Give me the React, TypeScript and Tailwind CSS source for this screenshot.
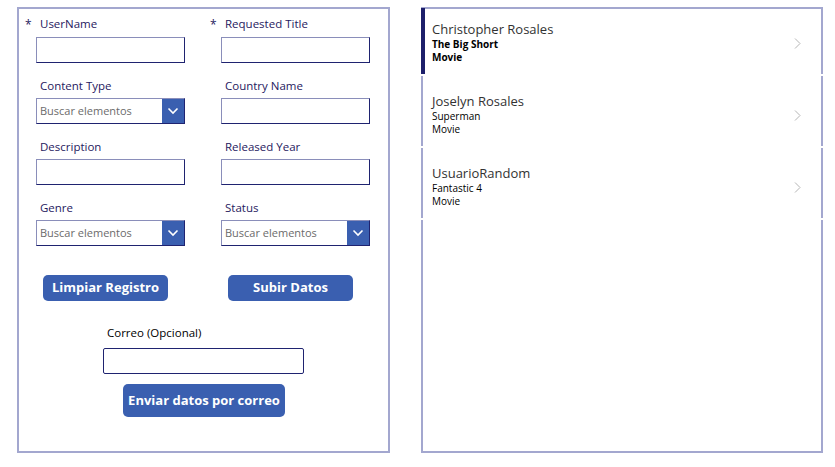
import React from 'react';

const font = { fontFamily: '"Open Sans", "Liberation Sans", sans-serif' };

const TextInput = ({ className = '' }: { className?: string }) => (
  <div
    className={`h-[26px] bg-white border border-[#1f2370] border-t-[#8a8eba] border-l-[#8a8eba] ${className}`}
  />
);

const Dropdown = () => (
  <div className="h-[26px] flex border border-[#1f2370] border-t-[#8a8eba] border-l-[#8a8eba] bg-white">
    <div className="flex-1 flex items-center pl-[3px] text-[11px] text-[#6b6b6b]">Buscar elementos</div>
    <div className="w-[22px] bg-[#3a5fb0] flex items-center justify-center">
      <svg width="12" height="8" viewBox="0 0 12 8" fill="none">
        <path d="M1.5 1.5 L6 6 L10.5 1.5" stroke="white" strokeWidth="1.6" />
      </svg>
    </div>
  </div>
);

const Field = ({
  label,
  required,
  kind = 'text',
  first,
}: {
  label: string;
  required?: boolean;
  kind?: 'text' | 'select';
  first?: boolean;
}) => (
  <div>
    <div
      className={`relative h-4 pl-[4px] text-[11.5px] leading-4 text-[#1f2060] ${first ? 'mt-[1px] mb-[5px]' : 'mb-1'}`}
    >
      {required && <span className="absolute -left-[11px] top-[1px] text-[12px]">*</span>}
      {label}
    </div>
    {kind === 'text' ? <TextInput /> : <Dropdown />}
  </div>
);

const Button = ({ children, className = '' }: { children: React.ReactNode; className?: string }) => (
  <button className={`bg-[#3a5fb0] text-white font-bold text-[13px] rounded-[5px] whitespace-nowrap ${className}`}>
    {children}
  </button>
);

const items = [
  { name: 'Christopher Rosales', title: 'The Big Short', type: 'Movie', selected: true },
  { name: 'Joselyn Rosales', title: 'Superman', type: 'Movie' },
  { name: 'UsuarioRandom', title: 'Fantastic 4', type: 'Movie' },
];

const App = () => {
  return (
    <div className="w-[835px] h-[467px] bg-white flex gap-[31px] pl-[17px] pt-[7px]" style={font}>
      <div className="w-[373px] h-[446px] border-2 border-[#a3a7cf] pl-[17px] pt-[6px]">
        <div className="grid grid-cols-[149px_149px] gap-x-[36px] gap-y-[15px]">
          <Field label="UserName" required first />
          <Field label="Requested Title" required first />
          <Field label="Content Type" kind="select" />
          <Field label="Country Name" />
          <Field label="Description" />
          <Field label="Released Year" />
          <Field label="Genre" kind="select" />
          <Field label="Status" kind="select" />
        </div>
        <div className="grid grid-cols-[149px_149px] gap-x-[36px] mt-[29px] pl-[7px]">
          <Button className="w-[125px] h-[26px]">Limpiar Registro</Button>
          <Button className="w-[125px] h-[26px]">Subir Datos</Button>
        </div>
        <div className="flex flex-col items-start mt-[24px]">
          <div className="w-[201px] ml-[67px]">
            <div className="h-4 pl-[4px] text-[11.5px] leading-4 text-black">Correo (Opcional)</div>
            <div className="mt-[7px] h-[26px] border border-[#1f2370] rounded-[2px] bg-white" />
          </div>
          <Button className="mt-[10px] ml-[87px] w-[162px] h-[33px]">Enviar datos por correo</Button>
        </div>
      </div>

      <div className="w-[402px] h-[446px] border-2 border-[#a3a7cf]">
        {items.map((it, i) => (
          <div
            key={it.name}
            className={`relative flex items-start pl-[9px] pr-[20px] ${i === 0 ? 'h-[67px] pt-[12px]' : 'h-[72px] pt-[17px]'}`}
          >
            {it.selected && <div className="absolute -left-[2px] -top-[1px] bottom-[1px] w-[4px] bg-[#1d1f6b]" />}
            <div className="flex-1">
              <div className="text-[13px] leading-4 text-[#323232]">{it.name}</div>
              <div className={`text-[10px] leading-[14px] text-black ${it.selected ? 'font-bold' : 'font-medium'}`}>
                {it.title}
              </div>
              <div className={`text-[10px] leading-[13px] text-black ${it.selected ? 'font-bold' : 'font-medium'}`}>
                {it.type}
              </div>
            </div>
            <svg className="mt-[17px]" width="7" height="11" viewBox="0 0 7 11" fill="none">
              <path d="M1 0.5 L6 5.5 L1 10.5" stroke="#b4b4b4" strokeWidth="1" />
            </svg>
            <div className="absolute -left-[2px] -right-[2px] bottom-0 h-[2px] bg-white" />
          </div>
        ))}
      </div>
    </div>
  );
};

export default App;
